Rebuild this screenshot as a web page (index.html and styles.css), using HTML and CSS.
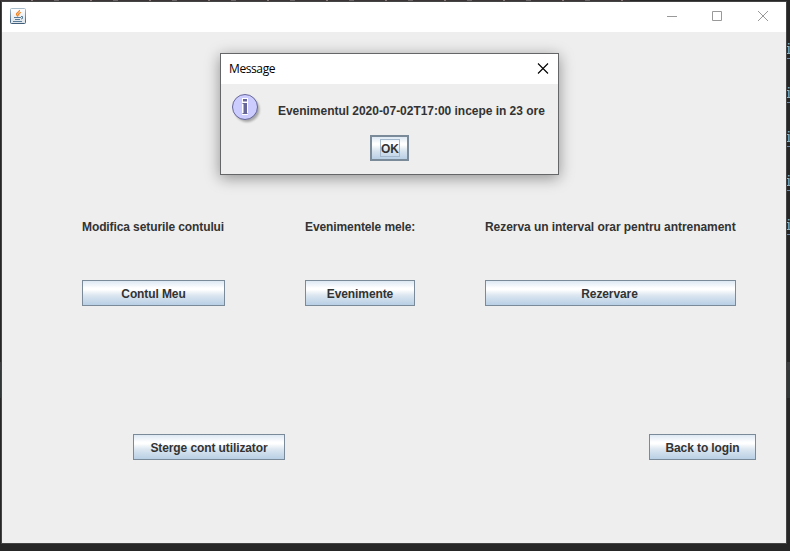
FILE: index.html
```html
<!DOCTYPE html>
<html lang="ro">
<head>
<meta charset="utf-8">
<title>Message</title>
<link rel="stylesheet" href="styles.css">
</head>
<body>
<div class="topcode"></div>
<div class="gutter"><span>i</span><span>i</span><span>i</span><span>i</span><span>i</span></div>
<div class="band"></div>
<main class="window">
  <header class="titlebar">
    <svg class="java" width="16" height="16" viewBox="0 0 16 16">
      <defs><linearGradient id="jf" x1="0" y1="0" x2="0" y2="1"><stop offset="0" stop-color="#a9bccb"/><stop offset="1" stop-color="#3f5d78"/></linearGradient>
      <linearGradient id="jb" x1="0" y1="0" x2="0" y2="1"><stop offset="0" stop-color="#fff"/><stop offset="1" stop-color="#dce3e9"/></linearGradient></defs>
      <rect x=".5" y=".5" width="15" height="15" rx="1" fill="url(#jb)" stroke="url(#jf)"/>
      <path d="M9.500 2C10 4 6 4.500 6.500 6.500L8 8.500M11 4.500C8 5.500 8.500 6.500 9 7.500" fill="none" stroke="#ee8120" stroke-width="1.300"/>
      <path d="M4 9.500h7M5 11.500h5M3 13.500h9M11 8.500h1.500v2L11 11" fill="none" stroke="#587b99" stroke-width="1"/>
    </svg>
    <svg class="controls" width="104" height="12" viewBox="0 0 104 12" fill="none" stroke="#999">
      <path d="M1 6.500h10M46.500 1.500h9v9h-9zM92 1l10 10M102 1L92 11"/>
    </svg>
  </header>
  <section class="content">
    <div class="options">
      <div class="option account"><span class="label">Modifica seturile contului</span><button>Contul Meu</button></div>
      <div class="option events"><span class="label">Evenimentele mele:</span><button>Evenimente</button></div>
      <div class="option booking"><span class="label">Rezerva un interval orar pentru antrenament</span><button>Rezervare</button></div>
    </div>
    <div class="actions"><button class="delete">Sterge cont utilizator</button><button class="back">Back to login</button></div>
  </section>
</main>
<section class="dialog">
  <header class="dialog-title"><span>Message</span>
    <svg width="12" height="12" viewBox="0 0 12 12" fill="none" stroke="#000" stroke-width="1.100"><path d="M1 .5l10 10M11 .5L1 10.500"/></svg>
  </header>
  <div class="message">
    <svg width="32" height="32" viewBox="0 0 32 32">
      <defs><filter id="sh" x="-30%" y="-30%" width="160%" height="160%"><feGaussianBlur stdDeviation="1.200"/></filter></defs>
      <circle cx="15" cy="15.500" r="12.500" fill="#777" opacity=".6" filter="url(#sh)"/>
      <circle cx="13" cy="13" r="12.500" fill="#ccf" stroke="#669"/>
      <path d="M10 4h6v17h-6z" fill="#fff"/>
      <path d="M11 5h4v2.500h-4zM10.500 9H15v10h.5v1h-5v-1h1v-9h-1z" fill="#669"/>
    </svg>
    <span class="text">Evenimentul 2020-07-02T17:00 incepe in 23 ore</span>
  </div>
  <button class="ok"><span>OK</span></button>
</section>
</body>
</html>
```
FILE: styles.css
```css
* { box-sizing: border-box; }
body { margin: 0; width: 790px; height: 551px; overflow: hidden; position: relative; background: #262626; padding: 1px; font: bold 12px/14px "Liberation Sans", Arial, sans-serif; color: #333; }
.window { position: relative; width: 786px; height: 543px; border: 1px solid #444; background: #eee; }
.titlebar { height: 30px; background: #fff; display: flex; justify-content: space-between; align-items: flex-start; padding: 6px 16px 0 8px; }
.controls { margin-top: 2px; }
.options { display: grid; grid-template-columns: 223px 180px 251px; padding: 188px 0 0 80px; }
.option { display: flex; flex-direction: column; gap: 46px; white-space: nowrap; }
.account { width: 143px; }
.events { width: 110px; }
.label { height: 14px; }
.account .label { letter-spacing: -.1px; }
.events .label { letter-spacing: -.1px; }
.booking .label { letter-spacing: -.05px; }
button { display: block; height: 26px; padding: 2px 0 0; border: 1px solid #7a8a99; border-radius: 0; background: linear-gradient(#dde8f3 0, #fff 30%, #fff 36%, #dbe6f0 60%, #b8cfe5 100%); font: inherit; color: inherit; text-align: center; white-space: nowrap; letter-spacing: -.1px; }
.booking button { padding-right: 2px; }
.actions { display: flex; justify-content: space-between; padding: 128px 30px 0 131px; }
.delete { width: 152px; }
.back { width: 107px; }
.dialog { position: absolute; left: 220px; top: 53px; width: 339px; height: 122px; border: 1px solid #646668; background: #eee; box-shadow: 0 3px 14px rgba(0,0,0,.4); }
.dialog-title { height: 30px; background: #fff; display: flex; align-items: center; justify-content: space-between; padding: 0 9px 0 8px; font: 12px/16px "Open Sans", "Noto Sans", sans-serif; color: #000; letter-spacing: -.4px; }
.message { display: flex; gap: 14px; padding: 10px 0 0 11px; height: 51px; white-space: nowrap; }
.text { padding-top: 10px; letter-spacing: -.03px; }
.ok { width: 39px; margin-left: 149px; border-width: 2px; padding: 0 8px; }
.ok span { display: block; border: 1px solid #a3b8cc; height: 18px; line-height: 18px; margin: 0 -1px 0 0; }
.gutter { position: absolute; left: 784px; top: 43px; display: flex; flex-direction: column; gap: 28px; font: 15px/16px "Liberation Mono", monospace; color: #8fb4c4; }
.gutter span { width: 6px; height: 16px; border-bottom: 1px solid #6d8cab; }
.band { position: absolute; left: 0; top: 362px; width: 790px; height: 36px; border-top: 8px solid #3c3d3e; background: #303536; }
.topcode { position: absolute; left: 0; top: 0; width: 630px; height: 1px; background: repeating-linear-gradient(90deg, #3b3537 0 31px, #887777 31px 33px, #3b3537 33px 54px, #6b6467 54px 59px); }
```
